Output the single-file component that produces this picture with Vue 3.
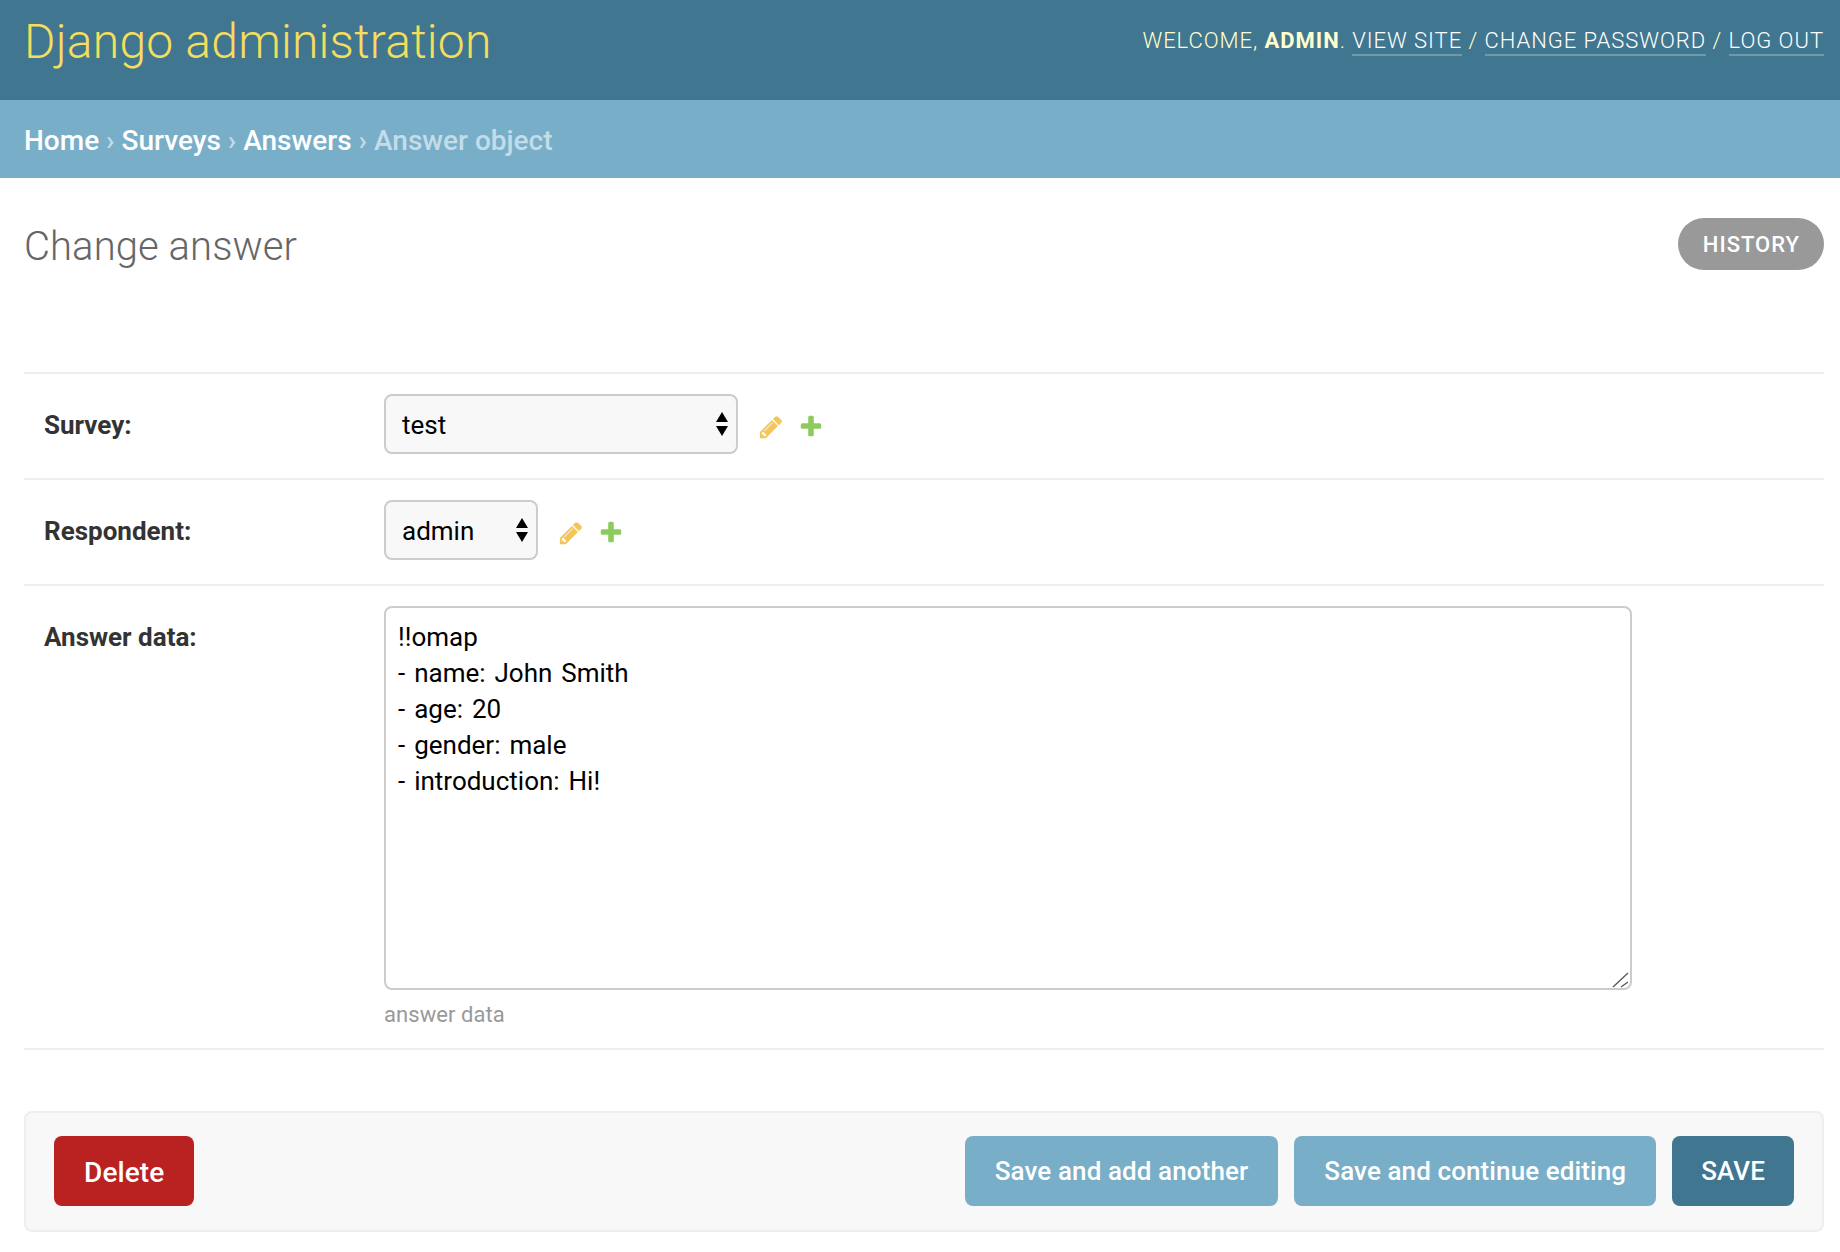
<script setup>
const crumbs = ['Home', 'Surveys', 'Answers']
const answerData = `!!omap
- name: John Smith
- age: 20
- gender: male
- introduction: Hi!`
const pencil = 'M491 1536l91-91-235-235-91 91v107h128v128h107zm523-928q0-22-22-22-10 0-17 7l-542 542q-7 7-7 17 0 22 22 22 10 0 17-7l542-542q7-7 7-17zm-54-192l416 416-832 832h-416v-416zm683 96q0 53-37 90l-166 166-416-416 166-165q36-38 90-38 53 0 91 38l235 234q37 39 37 91z'
const plus = 'M1600 736v192q0 40-28 68t-68 28h-416v416q0 40-28 68t-68 28h-192q-40 0-68-28t-28-68v-416h-416q-40 0-68-28t-28-68v-192q0-40 28-68t68-28h416v-416q0-40 28-68t68-28h192q40 0 68 28t28 68v416h416q40 0 68 28t28 68z'
const relations = [
  { label: 'Survey:', value: 'test', width: '354px' },
  { label: 'Respondent:', value: 'admin', width: '154px' },
]
</script>

<template>
  <div class="page">
    <header class="header">
      <h1 class="branding">Django administration</h1>
      <div class="user-tools">
        Welcome, <strong>admin</strong>. <a href="#">View site</a> / <a href="#">Change password</a> / <a href="#">Log out</a>
      </div>
    </header>

    <nav class="breadcrumbs">
      <template v-for="crumb in crumbs" :key="crumb">
        <a href="#">{{ crumb }}</a><span class="sep"> › </span>
      </template>Answer object
    </nav>

    <main class="content">
      <div class="title-row">
        <h2>Change answer</h2>
        <a href="#" class="history">History</a>
      </div>

      <form @submit.prevent>
        <div v-for="item in relations" :key="item.label" class="form-row">
          <label class="field-label">{{ item.label }}</label>
          <div class="select-wrap" :style="{ width: item.width }">
            <select class="select">
              <option>{{ item.value }}</option>
            </select>
            <svg class="arrows" width="12" height="24" viewBox="0 0 12 24">
              <path d="M6 0l6 10H0z" fill="#000" />
              <path d="M0 14h12L6 24z" fill="#000" />
            </svg>
          </div>
          <svg class="icon pencil" width="26" height="26" viewBox="0 0 1792 1792"><path :d="pencil" fill="#f4c65a" /></svg>
          <svg class="icon add" width="26" height="26" viewBox="0 0 1792 1792"><path :d="plus" fill="#8dcb5f" /></svg>
        </div>

        <div class="form-row last">
          <label class="field-label data-label">Answer data:</label>
          <div class="data-field">
            <div class="textarea-wrap">
              <textarea class="textarea" :value="answerData"></textarea>
              <svg class="grip" width="20" height="20" viewBox="0 0 20 20">
                <path d="M3 19L18 5M11 19l7-5" stroke="#555" stroke-width="1.3" fill="none" />
              </svg>
            </div>
            <p class="help">answer data</p>
          </div>
        </div>

        <div class="submit-row">
          <a href="#" class="btn delete">Delete</a>
          <div class="spacer"></div>
          <button class="btn light">Save and add another</button>
          <button class="btn light">Save and continue editing</button>
          <button class="btn save">SAVE</button>
        </div>
      </form>
    </main>
  </div>
</template>

<style>
html, body {
  margin: 0;
  background: #fff;
}
</style>

<style scoped>
.page {
  font-family: Roboto, "Liberation Sans", sans-serif;
  color: #333;
  font-size: 26px;
}

a {
  text-decoration: none;
}

.header {
  height: 100px;
  box-sizing: border-box;
  background: #417690;
  padding: 12px 16px 0 24px;
  display: flex;
  justify-content: space-between;
  align-items: flex-start;
}

.branding {
  margin: 0;
  font-size: 48px;
  line-height: 60px;
  font-weight: 300;
  letter-spacing: 0.22px;
  color: #f5dd5d;
}

.user-tools {
  font-size: 22px;
  line-height: 40px;
  letter-spacing: 0.96px;
  text-transform: uppercase;
  color: #ffc;
  font-weight: 300;
  padding-top: 9px;
}

.user-tools strong {
  font-weight: 700;
}

.user-tools a {
  color: #fff;
  border-bottom: 2px solid rgba(255, 255, 255, 0.25);
  padding-bottom: 1px;
}

.breadcrumbs {
  height: 78px;
  box-sizing: border-box;
  background: #79aec8;
  padding: 22px 24px 0;
  font-size: 28px;
  line-height: 38px;
  font-weight: 500;
  color: #c4dce8;
}

.breadcrumbs a {
  color: #fff;
}

.content {
  padding: 0 16px 0 24px;
}

.title-row {
  height: 194px;
  box-sizing: border-box;
  padding-top: 40px;
  display: flex;
  justify-content: space-between;
  align-items: flex-start;
}

.title-row h2 {
  margin: 1px 0 0;
  font-size: 40px;
  line-height: 56px;
  font-weight: 300;
  letter-spacing: 0.08px;
  color: #666;
}

.history {
  height: 52px;
  line-height: 54px;
  padding: 0 24px 0 25px;
  border-radius: 26px;
  background: #999;
  color: #fff;
  font-size: 22px;
  font-weight: 500;
  letter-spacing: 1px;
  text-transform: uppercase;
}

.form-row {
  display: flex;
  align-items: center;
  border-top: 2px solid #eee;
  padding: 20px 0 24px 20px;
}

.form-row.last {
  align-items: flex-start;
  border-bottom: 2px solid #eee;
  padding-bottom: 0;
}

.field-label {
  width: 340px;
  font-weight: 700;
  color: #333;
  flex-shrink: 0;
  padding-top: 2px;
}

.data-label {
  line-height: 36px;
  padding-top: 13px;
}

.select-wrap {
  position: relative;
  height: 60px;
}

.select {
  appearance: none;
  width: 100%;
  height: 100%;
  box-sizing: border-box;
  border: 2px solid #ccc;
  border-radius: 8px;
  background: #f8f8f8;
  padding: 2px 16px 0;
  font-family: inherit;
  font-size: 26px;
  color: #000;
}

.arrows {
  position: absolute;
  right: 10px;
  top: 18px;
}

.icon {
  margin-top: 6px;
}

.pencil {
  margin-left: 20px;
}

.add {
  margin-left: 14px;
}

.data-field {
  display: flex;
  flex-direction: column;
}

.textarea-wrap {
  position: relative;
}

.textarea {
  display: block;
  width: 1248px;
  height: 384px;
  box-sizing: border-box;
  border: 2px solid #ccc;
  border-radius: 8px;
  padding: 11px 12px 10px;
  font-family: inherit;
  font-size: 26px;
  line-height: 36px;
  word-spacing: 2.5px;
  color: #000;
  outline: none;
  resize: none;
}

.grip {
  position: absolute;
  right: 2px;
  bottom: 2px;
}

.help {
  margin: 10px 0 0;
  font-size: 22px;
  line-height: 30px;
  letter-spacing: 0.06px;
  color: #999;
  padding-bottom: 18px;
}

.submit-row {
  margin-top: 61px;
  display: flex;
  gap: 16px;
  align-items: center;
  height: 121px;
  box-sizing: border-box;
  padding: 0 28px 2px;
  background: #f8f8f8;
  border: 2px solid #eee;
  border-radius: 8px;
}

.spacer {
  flex: 1;
}

.btn {
  height: 70px;
  line-height: 70px;
  padding: 0 30px;
  border: none;
  border-radius: 8px;
  font-family: inherit;
  font-size: 26px;
  font-weight: 500;
  letter-spacing: 0.1px;
  color: #fff;
}

.delete {
  background: #ba2121;
  font-size: 28px;
  line-height: 74px;
}

.light {
  background: #79aec8;
}

.save {
  background: #417690;
  padding: 0 29px;
}
</style>
